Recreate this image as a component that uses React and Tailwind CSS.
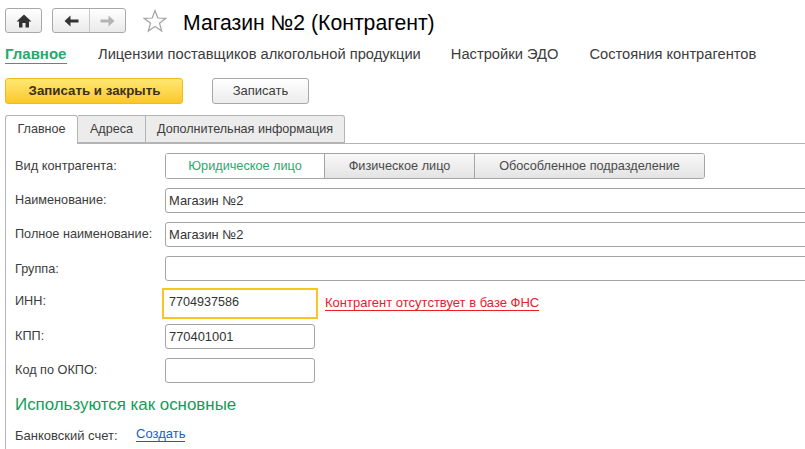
import React from "react";

const font = { fontFamily: '"Liberation Sans", Arial, sans-serif' };

const Field = ({ label, value, wide, mb, labelPad = "pt-[4px]" }) => (
  <div className={`flex items-start ${mb}`}>
    <label className={`w-[150px] shrink-0 ${labelPad} text-[12.7px] leading-[16px] text-[#3c3c3c]`}>{label}</label>
    <div
      className={`h-[25px] ${wide ? "w-[660px] shrink-0" : "w-[150px]"} rounded-[3px] border border-[#a5a5a5] bg-white pl-[3px] text-[12.9px] leading-[23px] text-[#333333]`}
    >
      {value}
    </div>
  </div>
);

const Segment = ({ children, width, active }) => (
  <div
    className={`h-full ${width} border-r border-[#a5a5a5] text-center text-[12.7px] leading-[24px] last:border-r-0 ${
      active ? "bg-white text-[#27a96c]" : "bg-gradient-to-b from-[#f8f8f8] to-[#e4e4e4] text-[#4a4a4a]"
    }`}
  >
    {children}
  </div>
);

export default function App() {
  return (
    <div style={font} className="h-[449px] w-[805px] overflow-hidden bg-white">
      {/* top bar */}
      <div className="flex h-[35px] items-start pl-[5px] pt-[8px]">
        <button className="flex h-[25px] w-[37px] items-center justify-center rounded-[3px] border border-[#a8a8a8] bg-gradient-to-b from-white to-[#eaeaea]">
          <svg width="16" height="14" viewBox="0 0 16 14">
            <path d="M8 0.5 L15.5 7.5 H13 V13.5 H9.5 V9 H6.5 V13.5 H3 V7.5 H0.5 Z" fill="#333333" />
          </svg>
        </button>
        <div className="ml-[10px] flex h-[25px] w-[74px] rounded-[3px] border border-[#a8a8a8] bg-gradient-to-b from-white to-[#eaeaea]">
          <div className="flex w-[37px] items-center justify-center border-r border-[#c8c8c8]">
            <svg width="15" height="12" viewBox="0 0 15 12">
              <path d="M0.5 6 L6.5 0.5 V4.5 H14.5 V7.5 H6.5 V11.5 Z" fill="#333333" />
            </svg>
          </div>
          <div className="flex flex-1 items-center justify-center">
            <svg width="15" height="12" viewBox="0 0 15 12">
              <path d="M14.5 6 L8.5 0.5 V4.5 H0.5 V7.5 H8.5 V11.5 Z" fill="#b4b4b4" />
            </svg>
          </div>
        </div>
        <svg className="ml-[17px] mt-[1px]" width="24" height="24" viewBox="0 0 24 24">
          <path
            d="M12 1.5 L14.8 9 L22.8 9.3 L16.5 14.2 L18.7 22 L12 17.5 L5.3 22 L7.5 14.2 L1.2 9.3 L9.2 9 Z"
            fill="#fdfdfd"
            stroke="#a3a3a3"
            strokeWidth="1.2"
          />
        </svg>
        <h1 className="ml-[16px] text-[21.2px] leading-[29px] text-black">Магазин №2 (Контрагент)</h1>
      </div>

      {/* section nav */}
      <nav className="mt-[10px] flex h-[19px] items-start pl-[5px] text-[14.7px] leading-[18px] text-[#3c3c3c]">
        <span className="w-[62px] whitespace-nowrap border-b border-[#27a96c] text-[15px] font-bold text-[#27a96c]">Главное</span>
        <span className="ml-[31px]">Лицензии поставщиков алкогольной продукции</span>
        <span className="ml-[30px]">Настройки ЭДО</span>
        <span className="ml-[31px]">Состояния контрагентов</span>
      </nav>

      {/* commands */}
      <div className="mt-[14px] flex h-[26px] pl-[5px]">
        <button className="w-[178px] rounded-[3px] border border-[#f0bb1c] bg-gradient-to-b from-[#ffe870] to-[#fcc725] pl-[1px] text-[13.3px] font-bold text-[#3a3216]">
          Записать и закрыть
        </button>
        <button className="ml-[29px] w-[97px] rounded-[3px] border border-[#a8a8a8] bg-gradient-to-b from-white to-[#ececec] text-[13px] text-[#3c3c3c]">
          Записать
        </button>
      </div>

      {/* tabs */}
      <div className="mt-[11px] flex h-[29px] items-start pl-[5px] text-[12.6px] text-[#3c3c3c]">
        <div className="z-10 h-[29px] w-[73px] rounded-t-[3px] border border-b-0 border-[#b4b4b4] bg-white text-center leading-[27px]">
          Главное
        </div>
        <div className="h-[28px] w-[68px] border-y border-r border-[#b4b4b4] bg-[#ececec] text-center leading-[27px]">
          Адреса
        </div>
        <div className="h-[28px] w-[199px] rounded-tr-[3px] border-y border-r border-[#b4b4b4] bg-[#ececec] text-center leading-[27px]">
          Дополнительная информация
        </div>
      </div>

      {/* form panel */}
      <div className="-mt-[1px] ml-[5px] h-[320px] border-l border-t border-[#b4b4b4] pl-[9px] pt-[9px]">
        <div className="mb-[9px] flex items-start">
          <label className="w-[150px] shrink-0 pt-[5px] text-[12.8px] leading-[16px] text-[#3c3c3c]">Вид контрагента:</label>
          <div className="flex h-[26px] w-[540px] overflow-hidden rounded-[3px] border border-[#a5a5a5]">
            <Segment width="w-[159px]" active>Юридическое лицо</Segment>
            <Segment width="w-[150px]">Физическое лицо</Segment>
            <Segment width="flex-1">Обособленное подразделение</Segment>
          </div>
        </div>
        <Field label="Наименование:" value="Магазин №2" wide mb="mb-[9px]" />
        <Field label="Полное наименование:" value="Магазин №2" wide mb="mb-[9px]" />
        <Field label="Группа:" value="" wide mb="mb-[7px]" labelPad="pt-[5px]" />

        <div className="mb-[5px] flex items-start">
          <label className="w-[147px] shrink-0 pt-[5px] text-[12.7px] leading-[16px] text-[#3c3c3c]">ИНН:</label>
          <div className="h-[31px] w-[156px] border-2 border-[#f8c61c] pl-[5px] text-[12.6px] leading-[25px] text-[#333333]">
            7704937586
          </div>
          <a className="ml-[7px] mt-[7px] h-[16px] border-b border-[#e8202e] text-[13px] leading-[15px] text-[#e8202e]">
            Контрагент отсутствует в базе ФНС
          </a>
        </div>
        <Field label="КПП:" value="770401001" mb="mb-[9px]" />
        <Field label="Код по ОКПО:" value="" mb="mb-[12px]" />

        <h2 className="text-[16.9px] leading-[20px] text-[#0f9d58]">Используются как основные</h2>
        <div className="mt-[12px] flex items-start text-[13px] leading-[16px]">
          <span className="w-[121px] pt-[1px] text-[#3c3c3c]">Банковский счет:</span>
          <a className="border-b border-[#1b5fb3] leading-[14px] text-[#1b5fb3]">Создать</a>
        </div>
      </div>
    </div>
  );
}
